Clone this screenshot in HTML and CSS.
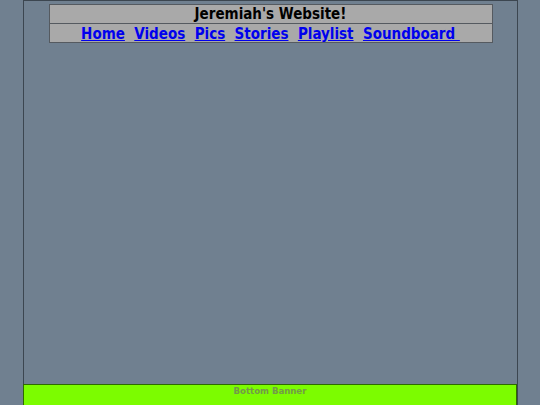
FILE: index.html
```html
<!DOCTYPE html>
<html>
<head>
<meta charset="utf-8">
<link rel="stylesheet" href="styles.css">
</head>
<body>
<div class="page">
  <div class="header">
    <div class="title">Jeremiah's Website!</div>
    <div class="nav">
      <a href="#">Home</a>&nbsp;
      <a href="#">Videos</a>&nbsp;
      <a href="#">Pics</a>&nbsp;
      <a href="#">Stories</a>&nbsp;
      <a href="#">Playlist</a>&nbsp;
      <a href="#">Soundboard&nbsp;</a>
    </div>
  </div>
</div>
<div class="banner">Bottom Banner</div>
</body>
</html>
```

FILE: styles.css
```css
html, body {
  margin: 0;
  padding: 0;
  height: 100%;
}
body {
  background: #708090;
  font-family: "DejaVu Sans Condensed", "DejaVu Sans", sans-serif;
  font-stretch: condensed;
}
.page {
  box-sizing: border-box;
  width: 495px;
  height: 100%;
  margin: 0 auto;
  border: 1px solid #3c4650;
  border-bottom: none;
  padding-top: 3px;
}
.header {
  width: 442px;
  margin: 0 0 0 25px;
  background: #a9a9a9;
  border: 1px solid #555a60;
}
.title {
  height: 18px;
  line-height: 18px;
  text-align: center;
  font-weight: bold;
  font-size: 15px;
  color: #000;
  border-bottom: 1px solid #555a60;
}
.nav {
  height: 18px;
  line-height: 20px;
  text-align: center;
  font-weight: bold;
  font-size: 15px;
  overflow: hidden;
}
.nav a {
  color: #0000ee;
  text-decoration: underline;
}
.banner {
  position: fixed;
  left: 23px;
  bottom: 0;
  box-sizing: border-box;
  width: 494px;
  height: 21px;
  background: #7cfc00;
  border: 1px solid #2e6a00;
  border-bottom: none;
  text-align: center;
  font-size: 9.5px;
  font-weight: bold;
  color: #739a4a;
  line-height: 12px;
}
```
